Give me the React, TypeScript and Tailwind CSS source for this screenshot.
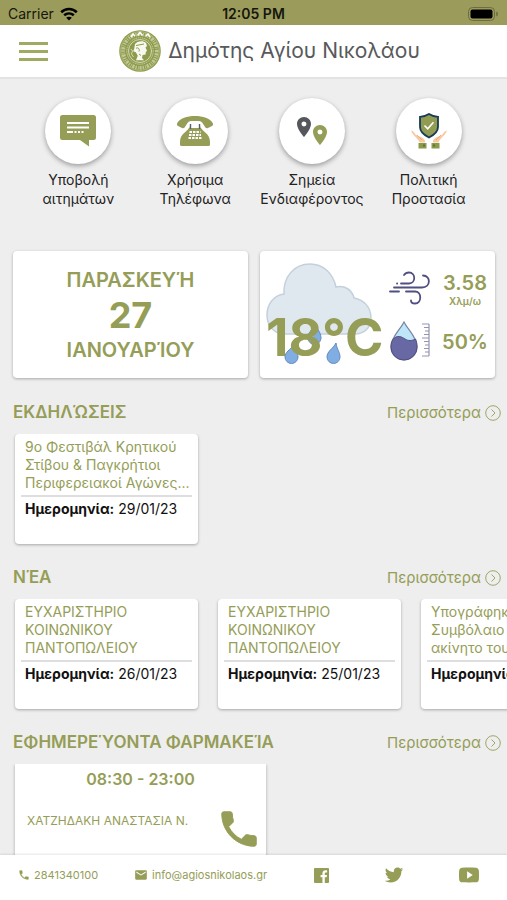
import type { ReactNode } from "react";
import { MdEmail, MdLocationOn } from "react-icons/md";
import { IoLogoTwitter, IoLogoYoutube } from "react-icons/io";

const OLIVE = "#959d57";

function WifiIcon() {
  return (
    <svg viewBox="0 0 18 14" className="h-[14px] w-[18px]" fill="none" stroke="#000" strokeWidth="2.6">
      <path d="M1.2 5.2C5.6 1 12.4 1 16.800 5.200" />
      <path d="M4.200 8.300c2.800-2.500 6.800-2.500 9.600 0" />
      <path d="M9 13.600 6.200 10.700c1.600-1.400 4-1.400 5.600 0z" fill="#000" stroke="none" />
    </svg>
  );
}

function BatteryIcon() {
  return (
    <svg viewBox="0 0 31 14" className="h-[14px] w-[31px]">
      <rect x="0.500" y="0.500" width="26" height="13" rx="4" fill="none" stroke="#6c6e40" />
      <rect x="2.500" y="2.500" width="22" height="9" rx="2" fill="#000" />
      <path d="M28.200 4.500c2.400 1 2.400 4 0 5z" fill="#6c6e40" />
    </svg>
  );
}

function PhoneIcon({ className }: { className: string }) {
  return (
    <svg viewBox="0 0 24 24" className={className} fill="currentColor">
      <path d="M6.620 10.790c1.440 2.830 3.760 5.140 6.590 6.590l2.200-2.200c.27-.27.67-.36 1.020-.24 1.120.37 2.330.57 3.570.57.55 0 1 .45 1 1V20c0 .55-.45 1-1 1C10.610 21 3 13.390 3 4c0-.55.45-1 1-1h3.500c.55 0 1 .45 1 1 0 1.250.2 2.450.57 3.570.11.35.03.74-.25 1.020l-2.200 2.200z" stroke="currentColor" strokeWidth="0.500" />
    </svg>
  );
}

function Seal() {
  return (
    <svg viewBox="0 0 42 42" className="size-[42px]" fill="none">
      <circle cx="21" cy="21" r="20.800" fill="#8f9b4c" />
      <circle cx="21" cy="21" r="16.800" stroke="#e4e8cd" strokeWidth="3.600" strokeDasharray="1.300 1 2.200 0.900 0.800 1.200" opacity="0.6" />
      <circle cx="21" cy="21" r="19.300" stroke="#c5cb98" strokeWidth="0.600" />
      <circle cx="21" cy="21" r="13.200" stroke="#c9cf9f" strokeWidth="1" strokeDasharray="1.500 0.700" />
      <circle cx="21" cy="21" r="11.500" stroke="#eef0df" strokeWidth="0.700" />
      <path d="M12 7l2-3 2 2M18.500 5.500 21 2.500l2.500 3M27 6l2-2 2 3" stroke="#fff" strokeWidth="1.600" />
      <path d="M16 14c2-3 8-4 11-1l1 3-1.500 1.500 1.600 3.500-1.300.8-.2 2.700-3 .5-.6 3 2 2.200h-8l1.800-4.500-2-3.500-2.600-1 1-2.500z" fill="#f7f8ef" />
      <path d="M17 15.500l8-1.500M17 18.500c2-2 4 1 3 3M20 24l2 1.500" stroke="#8f9b4c" strokeWidth="1" />
      <path d="M12 19l1.500 2-1 3 2 3" stroke="#e4e8cd" strokeWidth="0.800" />
    </svg>
  );
}

function MessageIcon() {
  return (
    <svg viewBox="0 0 36 32" className="h-8 w-9">
      <path d="M2.500 0h31A2.500 2.500 0 0 1 36 2.500v20a2.500 2.500 0 0 1-2.500 2.500H29v6.500L20 25H2.500A2.500 2.500 0 0 1 0 22.500v-20A2.500 2.500 0 0 1 2.500 0z" fill={OLIVE} />
      <path d="M7 8h22M7 12.500h22M7 17h6M14.500 17h2M18 17h2M21.500 17h2" stroke="#fff" strokeWidth="2" fill="none" />
    </svg>
  );
}

function TelephoneIcon() {
  return (
    <svg viewBox="0 0 36 32" className="h-8 w-9">
      <path d="M0 8.500C3 3 10 1 18 1s15 2 18 7.500c.4 1-.2 2-1 2.500l-4 2c-1 .4-2 .2-2.600-.6L25.500 8C24 6 22 6 18 6s-6 0-7.500 2l-2.900 4.400c-.6.8-1.600 1-2.600.6l-4-2c-.8-.5-1.400-1.500-1-2.500z" fill={OLIVE} />
      <path d="M12.500 11.500h11C25 17 33 18 33 27v2.500a1.500 1.500 0 0 1-1.500 1.500h-27A1.500 1.500 0 0 1 3 29.500V27c0-9 8-10 9.500-15.500z" fill={OLIVE} />
      <path d="M12.500 6.500h11v6.500h-11z" fill="#fff" />
      <path d="M13.500 9v5M22.500 9v5" stroke="#59626b" strokeWidth="1.400" />
      <path d="M12.500 17h11M12 20h12M11.500 23h13" stroke="#fff" strokeWidth="1.800" strokeDasharray="2.500 1" />
    </svg>
  );
}

function PinsIcon() {
  return (
    <span className="flex items-start">
      <MdLocationOn className="size-6 text-[#55575a]" />
      <MdLocationOn className="mt-2 -ml-2 size-6 text-[#959d57]" />
    </span>
  );
}

function ProtectionIcon() {
  return (
    <svg viewBox="0 0 36 36" className="size-9">
      <path d="M18 1c3 2 6 2.600 9 2.800V14c0 5-4 8-9 10.500C13 22 9 19 9 14V3.800C12 3.600 15 3 18 1z" fill="#919b52" stroke="#173b57" strokeWidth="1.800" />
      <path d="m13.500 12.500 3.200 3.300 5.800-6.500" fill="none" stroke="#fff" strokeWidth="1.600" />
      <path d="M0 17.500c2 0 4 3 5 4.500l6 2.500c2 1 3.500 3 3 5H8.500C7.500 25.500 2 23 0 17.500zM36 17.500c-2 0-4 3-5 4.500l-6 2.500c-2 1-3.500 3-3 5h5.500C28.500 25.500 34 23 36 17.500z" fill="#f6c9a0" />
      <path d="M6 22l5 5M30 22l-5 5" stroke="#e9a678" strokeWidth="0.800" />
      <path d="M7.500 30h8v5.500h-8zM20.500 30h8v5.500h-8z" fill="#8b994a" />
      <path d="M13 31.500v2M23 31.500v2" stroke="#52672f" strokeWidth="1.500" />
    </svg>
  );
}

function CloudIcon() {
  return (
    <svg viewBox="0 0 106 102" className="h-[102px] w-[106px]">
      <path d="M17 71C7 70 1 62 1 52c0-11 7-20 17-21C17 14 28 1 44 1c13 0 23 9 26 23 9-2 16 3 18 11 10 2 17 9 17 20 0 10-7 16-16 16z" fill="#dfe8ef" stroke="#c5d0dc" strokeWidth="1.500" />
      <g fill="#80aee3" stroke="#6488bd" strokeWidth="1">
        <path d="M49 62c4 6 6 9 6 13a6.500 6.500 0 0 1-13 0c0-4 3-8 7-13z" />
        <path d="M28 82c1 7 4 8 4 12a6.500 6.500 0 0 1-13 0c0-5 5-7 9-12z" />
        <path d="M70 80c1 7 4 9 4 14a6.500 6.500 0 0 1-13 0c0-6 6-8 9-14z" />
      </g>
    </svg>
  );
}

function WindIcon() {
  return (
    <svg viewBox="0 0 42 34" className="h-[34px] w-[42px]" fill="none" stroke="#514e80" strokeWidth="1.800" strokeLinecap="round">
      <path d="M12 12.500h8c7 0 7-11 0-11-3 0-4 1-5 2.500" />
      <path d="M5 16.500h28c9 0 9-12 1-12" />
      <path d="M17 20.500h9c7 0 7 12 0 12-3 0-4-1.500-4-3" />
      <path d="M1 20.500h9M8 12.500h.2" />
    </svg>
  );
}

function HumidityIcon() {
  return (
    <svg viewBox="0 0 42 40" className="h-10 w-[42px]">
      <path d="M15 1c4 8 13 15 13 25a13 13 0 0 1-26 0C2 16 11 9 15 1z" fill="#bfe5f8" stroke="#7783a0" strokeWidth="1.200" />
      <path d="M3.500 19C8 13 13 16 16 18s7 2 10.500 0c1 2 1.500 5 1.500 8a13 13 0 0 1-26 0c0-3 .5-5 1.500-7z" fill="#6868a4" stroke="#514e80" strokeWidth="1" />
      <path d="M33 3h7M35 6.500h5M36 10h4M35 13.500h5M33 17h7M35 20.500h5M36 24h4M35 27.500h5M36 31h4M33 35h7M40 3v32" fill="none" stroke="#9594b3" strokeWidth="1.200" />
    </svg>
  );
}

function FacebookIcon() {
  return (
    <svg viewBox="0 0 16 16" className="size-[15px]" fill="currentColor">
      <path d="M1 0h14a1 1 0 0 1 1 1v14a1 1 0 0 1-1 1h-3.500V9.900h2l.4-2.400h-2.400V6c0-.8.400-1.200 1.300-1.200h1.200V2.600c-3.200-.5-5 .5-5 3.100v1.800H7v2.400h2V16H1a1 1 0 0 1-1-1V1a1 1 0 0 1 1-1z" />
    </svg>
  );
}

const shortcuts: { lines: [string, string]; icon: ReactNode }[] = [
  { lines: ["Υποβολή", "αιτημάτων"], icon: <MessageIcon /> },
  { lines: ["Χρήσιμα", "Τηλέφωνα"], icon: <TelephoneIcon /> },
  { lines: ["Σημεία", "Ενδιαφέροντος"], icon: <PinsIcon /> },
  { lines: ["Πολιτική", "Προστασία"], icon: <ProtectionIcon /> },
];

type Item = { lines: string[]; date: string };

const events: Item[] = [
  { lines: ["9ο Φεστιβάλ Κρητικού", "Στίβου & Παγκρήτιοι", "Περιφερειακοί Αγώνες..."], date: "29/01/23" },
];

const news: Item[] = [
  { lines: ["ΕΥΧΑΡΙΣΤΗΡΙΟ", "ΚΟΙΝΩΝΙΚΟΥ", "ΠΑΝΤΟΠΩΛΕΙΟΥ"], date: "26/01/23" },
  { lines: ["ΕΥΧΑΡΙΣΤΗΡΙΟ", "ΚΟΙΝΩΝΙΚΟΥ", "ΠΑΝΤΟΠΩΛΕΙΟΥ"], date: "25/01/23" },
  { lines: ["Υπογράφηκε", "Συμβόλαιο για", "ακίνητο του"], date: "25/01/23" },
];

function Section({ title, children }: { title: string; children: ReactNode }) {
  return (
    <section className="flex flex-col gap-[9px]">
      <div className="flex h-6 items-center justify-between pr-1.5 pl-[13px]">
        <h2 className="text-[17px] font-semibold">{title}</h2>
        <a href="#more" className="flex items-center gap-1 text-[15px]">
          Περισσότερα
          <svg viewBox="0 0 16 16" className="size-4" fill="none" stroke="currentColor" strokeWidth="0.900">
            <circle cx="8" cy="8" r="7.300" />
            <path d="m6.500 4.500 3.500 3.500-3.500 3.500" />
          </svg>
        </a>
      </div>
      <div className="flex gap-5 overflow-hidden pb-[22px] pl-[15px]">{children}</div>
    </section>
  );
}

function ItemCard({ item }: { item: Item }) {
  return (
    <article className="h-[110px] w-[183px] shrink-0 rounded-sm bg-white px-1.5 pt-1 shadow-[0_1px_3px_rgba(0,0,0,0.3)]">
      <h3 className="border-b-2 border-[#dedede] px-1 pb-[3px] text-sm leading-[18px] whitespace-nowrap">
        {item.lines.map((line) => (
          <span key={line} className="block">{line}</span>
        ))}
      </h3>
      <p className="px-1 pt-0.5 text-sm leading-5 whitespace-nowrap text-[#111]">
        <b className="font-bold">Ημερομηνία:</b> {item.date}
      </p>
    </article>
  );
}

export default function App() {
  return (
    <div className="flex h-screen flex-col overflow-hidden bg-[#eeeeee] font-['Inter','Liberation_Sans',sans-serif] text-[#959d57]">
      <div className="grid h-[25px] shrink-0 grid-cols-3 items-center bg-[#9b9c5b] px-2 pt-0.5 text-sm leading-5 text-[#161610]">
        <span className="flex items-center gap-1.5">Carrier <WifiIcon /></span>
        <span className="text-center font-semibold">12:05 PM</span>
        <span className="flex justify-end"><BatteryIcon /></span>
      </div>

      <header className="flex h-[54px] shrink-0 items-center border-b-2 border-[#e3e3e3] bg-white pr-4 pl-[19px]">
        <button type="button" aria-label="Μενού" className="flex w-[29px] flex-col gap-[5px]">
          <span className="h-[3px] bg-[#a0aa62]" />
          <span className="h-[3px] bg-[#a0aa62]" />
          <span className="h-[3px] bg-[#a0aa62]" />
        </button>
        <div className="flex flex-1 items-center justify-center gap-[7px]">
          <Seal />
          <h1 className="text-[21px] whitespace-nowrap text-[#58595b]">Δημότης Αγίου Νικολάου</h1>
        </div>
      </header>

      <main className="min-h-0 flex-1 overflow-hidden">
        <nav className="grid grid-cols-4 px-5 pt-[19px]">
          {shortcuts.map(({ lines, icon }) => (
            <a key={lines[0]} href="#service" className="flex flex-col items-center gap-1.5">
              <span className="flex size-[66px] items-center justify-center rounded-full bg-white shadow-[0_2px_5px_rgba(0,0,0,0.35)]">{icon}</span>
              <span className="text-center text-sm leading-[19px] whitespace-nowrap text-[#222]">
                {lines[0]}<br />{lines[1]}
              </span>
            </a>
          ))}
        </nav>

        <div className="mt-[43px] grid grid-cols-2 gap-3 pr-3 pl-[13px]">
          <section className="flex h-[127px] flex-col items-center justify-center rounded-sm bg-white font-semibold shadow-[0_1px_3px_rgba(0,0,0,0.3)]">
            <p className="text-xl leading-[30px]">ΠΑΡΑΣΚΕΥΉ</p>
            <p className="text-4xl leading-10 font-bold">27</p>
            <p className="text-xl leading-[30px]">ΙΑΝΟΥΑΡΊΟΥ</p>
          </section>
          <section className="flex h-[127px] rounded-sm bg-white pt-3 pl-1.5 shadow-[0_1px_3px_rgba(0,0,0,0.3)]">
            <div className="relative w-[123px] shrink-0">
              <CloudIcon />
              <p className="absolute bottom-4 left-0 text-[52px] leading-[48px] font-bold whitespace-nowrap">18°C</p>
            </div>
            <div className="flex flex-col gap-4 pt-2">
              <WindIcon />
              <HumidityIcon />
            </div>
            <div className="flex flex-1 flex-col items-center pt-2 pl-1 font-semibold">
              <p className="text-xl leading-6">3.58</p>
              <p className="text-[10px] leading-3">Χλμ/ω</p>
              <p className="mt-[23px] text-xl leading-6">50%</p>
            </div>
          </section>
        </div>

        <div className="mt-[23px]">
          <Section title="ΕΚΔΗΛΏΣΕΙΣ">
            {events.map((item) => <ItemCard key={item.date} item={item} />)}
          </Section>
          <Section title="ΝΈΑ">
            {news.map((item, i) => <ItemCard key={i} item={item} />)}
          </Section>
          <Section title="ΕΦΗΜΕΡΕΎΟΝΤΑ ΦΑΡΜΑΚΕΊΑ">
            <article className="h-[110px] w-[251px] bg-white pt-1 shadow-[0_1px_3px_rgba(0,0,0,0.3)]">
              <p className="text-center text-base leading-[22px] font-semibold">08:30 - 23:00</p>
              <div className="flex items-center justify-between pt-4 pr-1 pl-3">
                <span className="pb-4 text-xs">ΧΑΤΖΗΔΑΚΗ ΑΝΑΣΤΑΣΙΑ Ν.</span>
                <a href="tel:2841340100" aria-label="Κλήση"><PhoneIcon className="size-[46px]" /></a>
              </div>
            </article>
          </Section>
        </div>
      </main>

      <footer className="flex h-[45px] shrink-0 items-start bg-white pt-3 pr-7 pl-[18px] text-[11px] leading-4 shadow-[0_-1px_2px_rgba(0,0,0,0.1)]">
        <a href="tel:2841340100" className="flex items-center gap-1"><PhoneIcon className="size-3" />2841340100</a>
        <a href="mailto:info@agiosnikolaos.gr" className="ml-9 flex items-center gap-1"><MdEmail className="size-3.5" />info@agiosnikolaos.gr</a>
        <div className="ml-auto flex h-4 w-[165px] items-center justify-between">
          <a href="#facebook" aria-label="Facebook"><FacebookIcon /></a>
          <a href="#twitter" aria-label="Twitter"><IoLogoTwitter className="size-5" /></a>
          <a href="#youtube" aria-label="YouTube"><IoLogoYoutube className="size-5" /></a>
        </div>
      </footer>
    </div>
  );
}
